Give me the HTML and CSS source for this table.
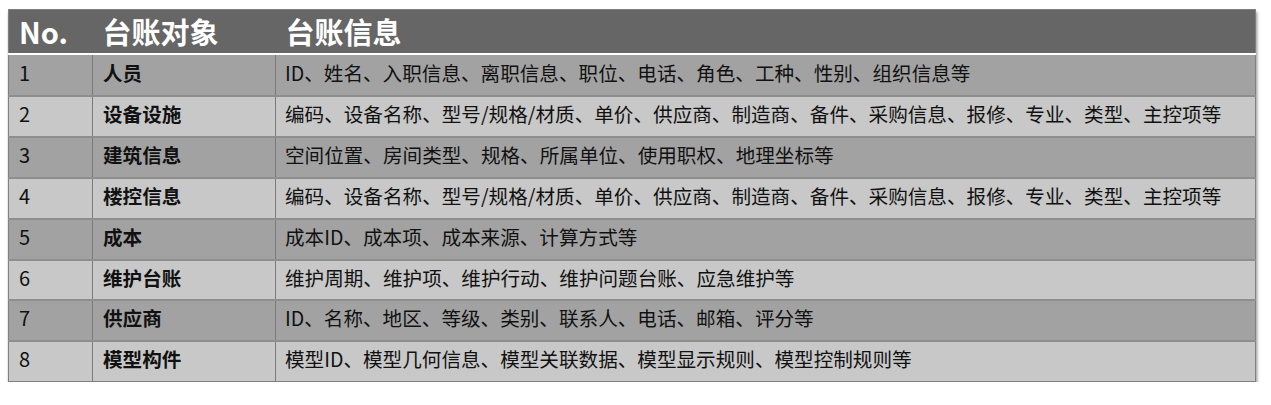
FILE: index.html
```html
<!DOCTYPE html>
<html lang="zh">
<head>
<meta charset="utf-8">
<link rel="stylesheet" href="styles.css">
</head>
<body>
<div class="page">
<table class="ledger">
  <colgroup>
    <col class="c-no"><col class="c-obj"><col class="c-info">
  </colgroup>
  <thead>
    <tr><th>No.</th><th>台账对象</th><th>台账信息</th></tr>
  </thead>
  <tbody>
    <tr class="odd"><td class="no">1</td><td class="obj">人员</td><td class="info">ID、姓名、入职信息、离职信息、职位、电话、角色、工种、性别、组织信息等</td></tr>
    <tr class="even"><td class="no">2</td><td class="obj">设备设施</td><td class="info">编码、设备名称、型号/规格/材质、单价、供应商、制造商、备件、采购信息、报修、专业、类型、主控项等</td></tr>
    <tr class="odd"><td class="no">3</td><td class="obj">建筑信息</td><td class="info">空间位置、房间类型、规格、所属单位、使用职权、地理坐标等</td></tr>
    <tr class="even"><td class="no">4</td><td class="obj">楼控信息</td><td class="info">编码、设备名称、型号/规格/材质、单价、供应商、制造商、备件、采购信息、报修、专业、类型、主控项等</td></tr>
    <tr class="odd"><td class="no">5</td><td class="obj">成本</td><td class="info">成本ID、成本项、成本来源、计算方式等</td></tr>
    <tr class="even"><td class="no">6</td><td class="obj">维护台账</td><td class="info">维护周期、维护项、维护行动、维护问题台账、应急维护等</td></tr>
    <tr class="odd"><td class="no">7</td><td class="obj">供应商</td><td class="info">ID、名称、地区、等级、类别、联系人、电话、邮箱、评分等</td></tr>
    <tr class="even"><td class="no">8</td><td class="obj">模型构件</td><td class="info">模型ID、模型几何信息、模型关联数据、模型显示规则、模型控制规则等</td></tr>
  </tbody>
</table>
</div>
</body>
</html>
```

FILE: styles.css
```css
html, body {
  margin: 0;
  padding: 0;
  background: #ffffff;
}
.page {
  padding: 9px 0 0 8px;
}
.ledger {
  width: 1248px;
  border-collapse: collapse;
  table-layout: fixed;
  font-family: "Microsoft YaHei", "Noto Sans CJK SC", "Noto Sans", sans-serif;
  box-shadow: 1px 3px 3px rgba(0, 0, 0, 0.45);
  border: 1px solid #808080;
}
.c-no { width: 84px; }
.c-obj { width: 183px; }
.ledger thead tr {
  background: #666666;
  border-bottom: 2px solid #ffffff;
}
.ledger th {
  height: 43px;
  padding: 0 0 0 10px;
  text-align: left;
  color: #ffffff;
  font-size: 29px;
  font-weight: 700;
  line-height: 43px;
  white-space: nowrap;
}
.ledger td {
  padding: 0 0 4px 10px;
  color: #111111;
  font-size: 19.6px;
  font-weight: 400;
  line-height: 34.9px;
  white-space: nowrap;
  border-top: 2px solid #8e8e8e;
  border-left: 1px solid #7a7a7a;
}
.ledger tbody tr:first-child td {
  border-top: none;
  padding-top: 1px;
}
.ledger td.no {
  border-left: none;
  font-size: 20px;
}
.ledger td.obj {
  font-weight: 700;
}
.ledger td.info {
  padding-left: 9px;
}
.odd { background: #a2a2a2; }
.even { background: #c8c8c8; }
```
